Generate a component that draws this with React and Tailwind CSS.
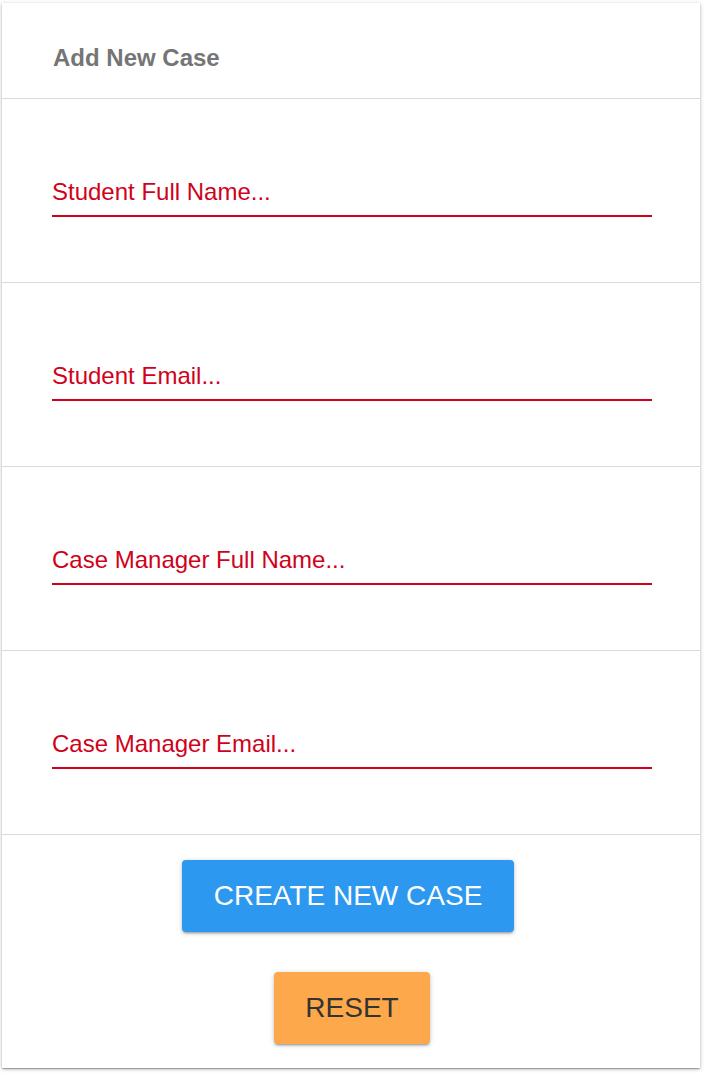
const fields = [
  "Student Full Name...",
  "Student Email...",
  "Case Manager Full Name...",
  "Case Manager Email...",
];

export default function App() {
  return (
    <div className="w-[706px] h-[1074px] bg-white font-['Liberation_Sans',Arial,sans-serif]">
      <div className="ml-[2px] mt-[3px] w-[698px] bg-white shadow-[0_1px_4px_0_rgba(0,0,0,0.28),0_1px_1px_0_rgba(0,0,0,0.14),0_2px_1px_-1px_rgba(0,0,0,0.12)]">
        <div className="h-[96px] pl-[51px] pt-[41px] border-b border-[#dadada]">
          <h2 className="text-[24px] leading-[28px] font-bold text-[#757575]">Add New Case</h2>
        </div>

        {fields.map((label) => (
          <div key={label} className="h-[184px] px-[50px] pt-[79px] border-b border-[#dadada]">
            <input
              type="text"
              placeholder={label}
              className="block w-[600px] h-[39px] pb-[9px] text-[24px] leading-[28px] text-[#d0021b] placeholder:text-[#d0021b] bg-transparent border-b-2 border-[#d0021b] outline-none"
            />
          </div>
        ))}

        <div className="flex flex-col items-center pt-[25px] pb-[24px] gap-[40px]">
          <button className="mr-[6px] h-[72px] px-[32px] rounded-[4px] bg-[#2c98f0] text-white text-[28px] leading-[32px] shadow-[0_1px_5px_0_rgba(0,0,0,0.2),0_2px_2px_0_rgba(0,0,0,0.14),0_3px_1px_-2px_rgba(0,0,0,0.12)]">
            CREATE NEW CASE
          </button>
          <button className="ml-[2px] h-[72px] px-[31px] rounded-[4px] bg-[#fda84a] text-[#333333] text-[28px] leading-[32px] shadow-[0_1px_5px_0_rgba(0,0,0,0.2),0_2px_2px_0_rgba(0,0,0,0.14),0_3px_1px_-2px_rgba(0,0,0,0.12)]">
            RESET
          </button>
        </div>
      </div>
    </div>
  );
}
